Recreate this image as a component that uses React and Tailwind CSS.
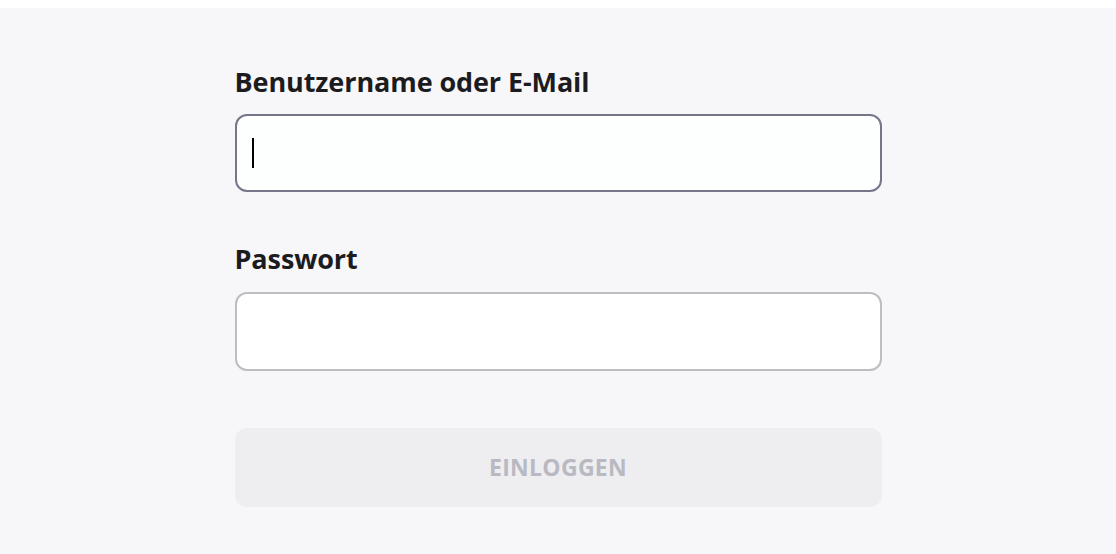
import { useState } from 'react';

const LoginForm = () => {
  const [user, setUser] = useState('');
  const [password, setPassword] = useState('');

  return (
    <div className="min-h-[554px] bg-white pt-[8px] font-['Open_Sans',sans-serif]">
      <div className="min-h-[546px] bg-[#f7f7f9] pt-[58px]">
        <form className="mx-auto w-[647px]" onSubmit={(e) => e.preventDefault()}>
          <label className="block text-[27px] font-bold leading-[32px] tracking-[-0.1px] text-[#1c1c1f]">
            Benutzername oder E-Mail
          </label>
          <div className="relative mt-[16px]">
            <input
              value={user}
              onChange={(e) => setUser(e.target.value)}
              className="h-[78px] w-full rounded-[12px] border-2 border-[#76768a] bg-[#fdfefe] px-[16px] text-[20px] caret-transparent outline-none"
            />
            <span className="pointer-events-none absolute left-[17px] top-[24px] h-[30px] w-[2px] bg-black" />
          </div>

          <label className="mt-[51px] block text-[27px] font-bold leading-[32px] tracking-[-0.1px] text-[#1c1c1f]">
            Passwort
          </label>
          <input
            type="password"
            value={password}
            onChange={(e) => setPassword(e.target.value)}
            className="mt-[17px] h-[79px] w-full rounded-[12px] border-2 border-[#bdbdc2] bg-white px-[16px] text-[20px] outline-none"
          />

          <button
            type="submit"
            disabled
            className="mt-[57px] flex h-[79px] w-full items-center justify-center rounded-[12px] bg-[#eeeef1] text-[23px] font-bold tracking-[0.3px] text-[#b9b9c1]"
          >
            EINLOGGEN
          </button>
        </form>
      </div>
    </div>
  );
};

export default function App() {
  return <LoginForm />;
}
